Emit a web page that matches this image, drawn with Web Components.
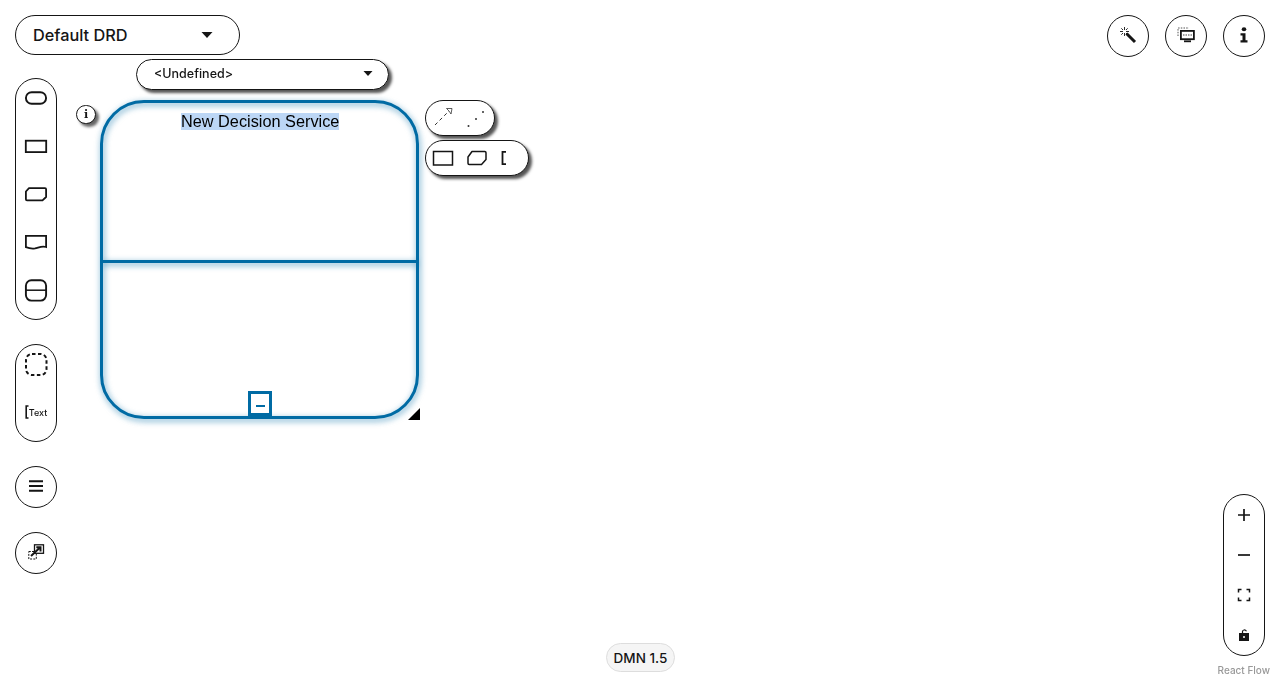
<!DOCTYPE html>
<html>
<head>
<meta charset="utf-8">
<title>DMN Editor</title>
<style>
  html, body { margin: 0; height: 100%; background: #fff; }
  body { font-family: "Inter", "Noto Sans", sans-serif; color: #151515; }
</style>
</head>
<body>
<dmn-editor></dmn-editor>

<script>
const INK = "#151515";
const svg = (w, h, body, extra = "") =>
  `<svg width="${w}" height="${h}" viewBox="0 0 ${w} ${h}" ${extra}>${body}</svg>`;

const ICONS = {
  inputData: svg(24, 24, `<rect x="1.900" y="6.200" width="20.200" height="11.600" rx="5.800" fill="none" stroke="${INK}" stroke-width="1.900"/>`),
  decision: svg(24, 24, `<rect x="1.800" y="6.700" width="20.400" height="11.400" fill="none" stroke="${INK}" stroke-width="1.800"/>`),
  bkm: svg(24, 24, `<path d="M5 6.200H21C21.700 6.200 22.100 6.600 22.100 7.300V15L18.500 18.300H3C2.300 18.300 1.900 17.900 1.900 17.200V9.500Z" fill="none" stroke="${INK}" stroke-width="1.800" stroke-linejoin="round"/>`),
  knowledge: svg(24, 24, `<path d="M1.900 5.800H22.100V17C18 15.600 15 17.500 11 18.400C7 19 4 18 1.900 17.200Z" fill="none" stroke="${INK}" stroke-width="1.800"/>`),
  service: svg(24, 24, `<rect x="1.900" y="2.200" width="20.200" height="20.400" rx="5.500" fill="none" stroke="${INK}" stroke-width="1.900"/><path d="M1.900 12.200H22.100" stroke="${INK}" stroke-width="1.500"/>`),
  group: svg(24, 24, `<rect x="2" y="2" width="20.500" height="21" rx="6" fill="none" stroke="${INK}" stroke-width="2" stroke-dasharray="3.500 2.500"/>`),
  bars: svg(16, 16, `<path d="M1 2.300H15M1 7H15M1 11.700H15" stroke="${INK}" stroke-width="2.100"/>`),
  overlay: svg(18, 18, `<rect x="1.800" y="7.500" width="7.500" height="7.500" fill="none" stroke="${INK}" stroke-dasharray="2 1.200"/><rect x="7.500" y=".8" width="9" height="8.500" fill="#fff" stroke="${INK}" stroke-width="1.300"/><path d="M4 12L13 3.500M9.300 3.200H13.500V7.500" fill="none" stroke="${INK}" stroke-width="2"/>`),
  wand: svg(18, 18, `<path d="M7.500 7.500L16 16" stroke="${INK}" stroke-width="3"/><path d="M5.500 1V4M5.500 7V10M1 5.500H4M7 5.500H10M2.300 2.300L4 4M7 7L8.500 8.500M8.700 2.300L7 4M2.300 8.700L4 7" stroke="${INK}" stroke-width=".9"/>`),
  screen: svg(20, 18, `<path d="M2 10V2H13" fill="none" stroke="#555" stroke-dasharray="1.500 1.200"/><rect x="4.900" y="4.900" width="13" height="8.300" fill="#fff" stroke="${INK}" stroke-width="1.800"/><path d="M7 9H16" stroke="#444" stroke-dasharray="1.500 1"/><path d="M8 15.300H15" stroke="${INK}" stroke-width="1.800"/>`),
  info: `<svg width="10" height="16" viewBox="0 0 10 18" preserveAspectRatio="none"><circle cx="5" cy="2.500" r="2.300" fill="${INK}"/><path d="M1.500 7H6.500V15H8.500V17.500H1.500V15H3.500V9.500H1.500Z" fill="${INK}"/></svg>`,
  plus: svg(14, 14, `<path d="M7 1V13M1 7H13" stroke="${INK}" stroke-width="1.700"/>`),
  minus: svg(14, 14, `<path d="M1 7H13" stroke="${INK}" stroke-width="1.700"/>`),
  fit: svg(14, 14, `<path d="M1.500 4.500V1.500H4.500M9.500 1.500H12.500V4.500M12.500 9.500V12.500H9.500M4.500 12.500H1.500V9.500" fill="none" stroke="${INK}" stroke-width="1.500"/>`),
  lock: svg(14, 14, `<path d="M5.500 5V3.500C5.500 1.800 8.200 1.200 9.500 3.300" fill="none" stroke="${INK}" stroke-width="1.200"/><path d="M2 5H12V13H2Z" fill="${INK}"/><circle cx="7" cy="9" r="1" fill="#fff"/>`),
  caret: svg(12, 8, `<path d="M.5 1H11.500L6 7Z" fill="${INK}"/>`),
  caretSmall: svg(10, 7, `<path d="M.5 1H9.500L5 6Z" fill="${INK}"/>`),
  edgeSolid: svg(22, 22, `<path d="M2 18L17 3" stroke="#333" stroke-dasharray="3.500 3"/><path d="M13.500 1.500H19L18 7L16 4Z" fill="#fff" stroke="#333" stroke-width=".8"/>`),
  edgeDots: svg(22, 22, `<circle cx="3.500" cy="19" r="1" fill="#333"/><circle cx="11" cy="12" r="1" fill="#333"/><circle cx="18" cy="5" r="1" fill="#333"/>`),
  morphDecision: svg(22, 16, `<rect x="1.500" y="1.500" width="19" height="13.500" fill="none" stroke="${INK}" stroke-width="1.500"/>`),
  morphBkm: svg(22, 16, `<path d="M6 1.500H18.800C19.600 1.500 20 1.900 20 2.700V9.500L15.500 14.500H3.200C2.400 14.500 2 14.100 2 13.300V7Z" fill="none" stroke="${INK}" stroke-width="1.500" stroke-linejoin="round"/>`),
  bracket: svg(8, 16, `<path d="M6 1.800H2.500V14.200H6" fill="none" stroke="${INK}" stroke-width="1.800"/>`),
  textBracket: svg(4, 14, `<path d="M3.500 1H1.200V13H3.500" fill="none" stroke="${INK}" stroke-width="1.600"/>`)
};

// base box used by every bordered thing on the canvas
class DmnPill extends HTMLElement {
  constructor() {
    super();
    this.attachShadow({mode: "open"}).innerHTML = `
      <style>
        :host { display: flex; box-sizing: border-box; align-items: center;
                background: #fff; border: 1px solid ${INK}; border-radius: 21px; flex: none; }
        :host([column]) { flex-direction: column; }
        :host([shadow]) { box-shadow: 3px 3px 3px #555; border-radius: 18px; }
      </style>
      <slot></slot>`;
  }
}
customElements.define("dmn-pill", DmnPill);

class DmnIcon extends HTMLElement {
  static get observedAttributes() { return ["name"]; }
  constructor() {
    super();
    this.attachShadow({mode: "open"});
  }
  attributeChangedCallback(prop, oldValue, newValue) {
    this.shadowRoot.innerHTML = `
      <style>
        :host { display: flex; align-items: center; justify-content: center; flex: none; }
        svg { display: block; }
      </style>
      ${ICONS[newValue] || ""}`;
  }
}
customElements.define("dmn-icon", DmnIcon);

class DmnSelect extends HTMLElement {
  constructor() {
    super();
    const caret = this.getAttribute("caret") || "caret";
    this.attachShadow({mode: "open"}).innerHTML = `
      <style>
        :host { display: block; flex: none; }
        dmn-pill { justify-content: space-between; height: var(--h, 40px); padding: var(--pad, 0 26px 0 17px);
                   font: var(--f, 500 16.300px "Inter", sans-serif); box-shadow: var(--shadow, none); }
      </style>
      <dmn-pill><slot></slot><dmn-icon name="${caret}"></dmn-icon></dmn-pill>`;
  }
}
customElements.define("dmn-select", DmnSelect);

class DmnNode extends HTMLElement {
  constructor() {
    super();
    this.attachShadow({mode: "open"}).innerHTML = `
      <style>
        :host { display: block; position: absolute; left: 100px; top: 100px; width: 319px; height: 319px; }
        .frame { position: absolute; inset: 0; box-sizing: border-box; border: 3px solid #006ba4; border-radius: 44px;
                 filter: drop-shadow(1.500px 2px 3px rgba(0,107,164,.7)); }
        .frame::after { content: ""; position: absolute; left: 0; right: 0; top: 157px; height: 3px; background: #006ba4; }
        .name { position: absolute; left: 81px; top: 13px; font: 16.300px/17px "Liberation Sans", Arial, sans-serif;
                color: #000; background: #bcd6f5; white-space: nowrap; }
        .collapse { position: absolute; left: 148px; top: 291px; width: 24px; height: 25px; box-sizing: border-box;
                    border: 3px solid #006ba4; background: #fff; display: flex; align-items: center; justify-content: center; }
        .collapse i { display: block; width: 9px; height: 2px; background: #006ba4; margin-top: 5px; }
        .resize { position: absolute; left: 308px; top: 308px; width: 12px; height: 12px; background: #000;
                  clip-path: polygon(100% 0, 100% 100%, 0 100%); }
      </style>
      <div class="frame"></div>
      <div class="name">New Decision Service</div>
      <div class="collapse"><i></i></div>
      <div class="resize"></div>`;
  }
}
customElements.define("dmn-node", DmnNode);

class DmnEditor extends HTMLElement {
  constructor() {
    super();
    this.attachShadow({mode: "open"}).innerHTML = `
      <style>
        :host { display: block; position: relative; width: 1280px; height: 680px; overflow: hidden; will-change: opacity; }
        .left { position: absolute; left: 15px; top: 15px; display: flex; flex-direction: column; align-items: flex-start; gap: 24px; }
        .left dmn-select { width: 225px; margin-bottom: -1px; }
        .round { width: 42px; height: 42px; justify-content: center; }
        .palette { width: 42px; padding-top: 7px; gap: 24px; }
        .p1 { height: 242px; }
        .p2 { height: 98px; }
        .label { display: flex; align-items: center; height: 24px; font: 500 9px "Inter", sans-serif; }
        .right { position: absolute; right: 15px; top: 15px; display: flex; gap: 16px; }
        .right dmn-icon { margin-bottom: 2px; }
        .controls { position: absolute; left: 1223px; top: 494px; width: 42px; height: 162px; padding-top: 13px; gap: 26px; }
        .attribution { position: absolute; right: 10px; bottom: 4px; font: 500 10px "Inter", sans-serif; color: #999; }
        .version { position: absolute; left: 606px; top: 643px; height: 29px; width: 69px; justify-content: center;
                   background: #f5f5f5; border-color: #ddd; font: 500 13.500px "Inter", sans-serif; color: ${INK}; }
        .undefined { position: absolute; left: 136px; top: 59px; width: 253px; --h: 31px;
                     --pad: 0 15px 2px 17px; --f: 500 12.500px "Inter", sans-serif; --shadow: 3px 3px 3px #555; }
        .info { position: absolute; left: 76px; top: 105px; width: 20px; height: 19px; justify-content: center;
                box-shadow: 3px 3px 3px #666; }
        .edges { position: absolute; left: 425px; top: 100px; width: 70px; height: 36px; justify-content: space-between; padding: 0 7px; }
        .morph { position: absolute; left: 425px; top: 140px; width: 104px; height: 36px; justify-content: flex-start; padding: 0 6px; gap: 12px; overflow: hidden; }
      </style>

      <div class="left">
        <dmn-select>Default DRD</dmn-select>
        <dmn-pill column class="palette p1">
          <dmn-icon name="inputData"></dmn-icon>
          <dmn-icon name="decision"></dmn-icon>
          <dmn-icon name="bkm"></dmn-icon>
          <dmn-icon name="knowledge"></dmn-icon>
          <dmn-icon name="service"></dmn-icon>
        </dmn-pill>
        <dmn-pill column class="palette p2">
          <dmn-icon name="group"></dmn-icon>
          <div class="label"><dmn-icon name="textBracket"></dmn-icon>Text</div>
        </dmn-pill>
        <dmn-pill class="round"><dmn-icon name="bars"></dmn-icon></dmn-pill>
        <dmn-pill class="round"><dmn-icon name="overlay"></dmn-icon></dmn-pill>
      </div>

      <div class="right">
        <dmn-pill class="round"><dmn-icon name="wand"></dmn-icon></dmn-pill>
        <dmn-pill class="round"><dmn-icon name="screen"></dmn-icon></dmn-pill>
        <dmn-pill class="round"><dmn-icon name="info"></dmn-icon></dmn-pill>
      </div>

      <dmn-node></dmn-node>
      <dmn-select class="undefined" caret="caretSmall">&lt;Undefined&gt;</dmn-select>
      <dmn-pill class="info"><span style="font:700 11px 'DejaVu Serif',serif">i</span></dmn-pill>
      <dmn-pill shadow class="edges"><dmn-icon name="edgeSolid"></dmn-icon><dmn-icon name="edgeDots"></dmn-icon></dmn-pill>
      <dmn-pill shadow class="morph">
        <dmn-icon name="morphDecision"></dmn-icon>
        <dmn-icon name="morphBkm"></dmn-icon>
        <dmn-icon name="bracket"></dmn-icon>
      </dmn-pill>

      <dmn-pill column class="controls">
        <dmn-icon name="plus"></dmn-icon>
        <dmn-icon name="minus"></dmn-icon>
        <dmn-icon name="fit"></dmn-icon>
        <dmn-icon name="lock"></dmn-icon>
      </dmn-pill>
      <dmn-pill class="version">DMN 1.5</dmn-pill>
      <div class="attribution">React Flow</div>`;
  }
}
customElements.define("dmn-editor", DmnEditor);
</script>
</body>
</html>
